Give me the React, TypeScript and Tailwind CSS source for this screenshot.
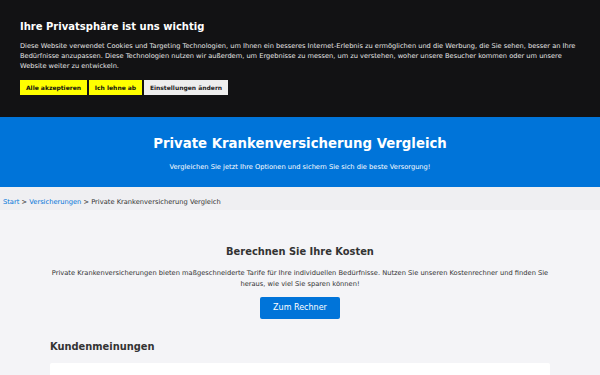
export default function App() {
  return (
    <div className="min-h-[375px] bg-[#f4f4f7] font-['DejaVu_Sans',sans-serif] text-[#333]">
      {/* Cookie-Hinweis */}
      <div className="bg-[#121214] px-5 pt-[20px] pb-[22px] text-[#e6e6e6]">
        <h2 className="text-[10px] font-bold leading-[14px] text-white">
          Ihre Privatsphäre ist uns wichtig
        </h2>
        <p className="mt-[7px] text-[6.65px] leading-[10px]">
          Diese Website verwendet Cookies und Targeting Technologien, um Ihnen ein besseres Internet-Erlebnis zu ermöglichen und die Werbung, die Sie sehen, besser an Ihre Bedürfnisse anzupassen. Diese Technologien nutzen wir außerdem, um Ergebnisse zu messen, um zu verstehen, woher unsere Besucher kommen oder um unsere Website weiter zu entwickeln.
        </p>
        <div className="mt-[9px] flex gap-[2px]">
          <button className="h-[15px] w-[67px] bg-[#ffff00] text-[6px] font-bold text-[#111]">
            Alle akzeptieren
          </button>
          <button className="h-[15px] w-[53px] bg-[#ffff00] text-[6px] font-bold text-[#111]">
            Ich lehne ab
          </button>
          <button className="ml-[0px] h-[15px] w-[84px] bg-[#eeeeee] text-[6px] font-bold text-[#222]">
            Einstellungen ändern
          </button>
        </div>
      </div>

      {/* Kopfbereich */}
      <header className="h-[70px] bg-[#0074d9] pt-[17.5px] text-center text-white">
        <h1 className="text-[13.3px] font-bold leading-[17px]">
          Private Krankenversicherung Vergleich
        </h1>
        <p className="mt-[11px] text-[6.7px] leading-[9px]">
          Vergleichen Sie jetzt Ihre Optionen und sichern Sie sich die beste Versorgung!
        </p>
      </header>

      {/* Breadcrumb */}
      <nav className="h-[23px] bg-[#efeff2] px-[3px] pt-[10.5px] text-[6.7px] leading-[9px] text-[#333]">
        <a className="text-[#0074d9]">Start</a> &gt;{" "}
        <a className="text-[#0074d9]">Versicherungen</a> &gt; Private Krankenversicherung Vergleich
      </nav>

      <main className="mx-auto w-[500px] pt-[34.5px]">
        <section className="text-center">
          <h2 className="text-[9.9px] font-bold leading-[13px] text-[#333]">
            Berechnen Sie Ihre Kosten
          </h2>
          <p className="mt-[10px] text-[6.7px] leading-[11.5px] text-[#333]">
            Private Krankenversicherungen bieten maßgeschneiderte Tarife für Ihre individuellen Bedürfnisse. Nutzen Sie unseren Kostenrechner und finden Sie heraus, wie viel Sie sparen können!
          </p>
          <button className="mt-[6px] h-[22px] w-[80px] rounded-[2px] bg-[#0074d9] text-[8px] text-white">
            Zum Rechner
          </button>
        </section>

        <h2 className="mt-[21.5px] text-[9.9px] font-bold leading-[13px] text-[#333]">
          Kundenmeinungen
        </h2>
        <div className="mt-[9.5px] h-[40px] rounded-[2px] bg-white" />
      </main>
    </div>
  );
}
